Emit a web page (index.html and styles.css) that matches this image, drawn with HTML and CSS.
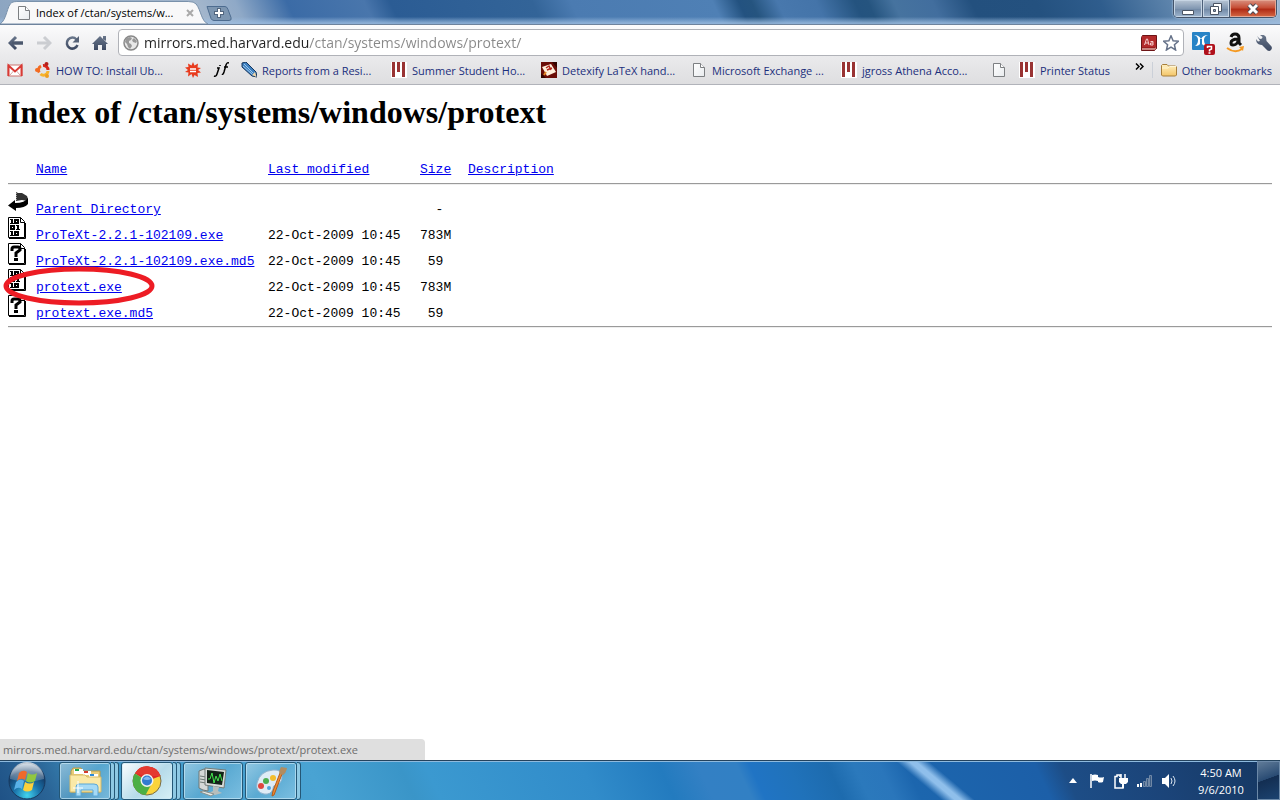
FILE: index.html
```html
<!DOCTYPE html>
<html lang="en">
<head>
<meta charset="utf-8">
<title>Index of /ctan/systems/windows/protext</title>
<link rel="stylesheet" href="styles.css">
</head>
<body>
<svg class="defs" width="0" height="0" aria-hidden="true">
  <defs>
    <linearGradient id="paper" x2="1" y2="1"><stop offset="0" stop-color="#fff"/><stop offset="1" stop-color="#e8ebee"/></linearGradient>
    <linearGradient id="shade" x2="0" y2="1"><stop offset="0" stop-color="#68758a"/><stop offset="1" stop-color="#3d4962"/></linearGradient>
    <linearGradient id="folder" x2="0" y2="1"><stop offset="0" stop-color="#fff0c0"/><stop offset="1" stop-color="#f3c568"/></linearGradient>
    <radialGradient id="orb" cx=".5" cy=".9" r=".9"><stop offset="0" stop-color="#42d4ee"/><stop offset=".4" stop-color="#1a73ab"/><stop offset=".75" stop-color="#123c69"/><stop offset="1" stop-color="#7694b1"/></radialGradient>
    <linearGradient id="gloss" x2="0" y2="1"><stop offset="0" stop-color="#fff" stop-opacity=".75"/><stop offset="1" stop-color="#fff" stop-opacity=".15"/></linearGradient>
    <symbol id="page" viewBox="0 0 16 16"><path d="M2.5 1.5h7l4 4v9h-11z" fill="url(#paper)" stroke="#7c7f82"/><path d="M9.5 1.5v4h4" fill="#fff" stroke="#7c7f82"/></symbol>
    <symbol id="mit" viewBox="0 0 16 16"><path fill="#fff" d="M0 0h16v16H0z"/><path fill="#993333" d="M1 0h3v15H1zM6 0h3v10H6zM11 0h3v15h-3z"/></symbol>
    <symbol id="sheet" viewBox="0 0 20 22"><path d="M.5.5h12l4 4v16H.5z" fill="#fff" stroke="#000"/><path d="M12.5.5v5h4" fill="none" stroke="#000"/><path d="M17.500 6v15.500H1" fill="none" stroke="#000"/></symbol>
    <symbol id="binary" viewBox="0 0 20 22"><use href="#sheet"/><g fill="none" stroke="#000" stroke-width="2"><path d="M4 2v5M4 14v5M10 8v5"/><rect x="7" y="3" width="3" height="3"/><rect x="3" y="9" width="3" height="3"/><rect x="7" y="15" width="3" height="3"/></g><path d="M2 2h2v1H2zM2 6h4v1H2zM2 14h2v1H2zM2 18h4v1H2zM8 8h2v1H8zM8 12h4v1H8z"/></symbol>
    <symbol id="unknown" viewBox="0 0 20 22"><use href="#sheet"/><path d="M4 8V6q0-2 2-2h4q2 0 2 2v1l-4 3v4" fill="none" stroke="#000" stroke-width="3"/><path d="M6 15h4v3H6z"/></symbol>
  </defs>
</svg>

<header class="browser">
  <div class="titlebar">
    <div class="tab">
      <svg class="tab-shape" viewBox="0 0 210 23" preserveAspectRatio="none" aria-hidden="true"><path d="M0 23C7 19 7 4 12 1.500Q14 .5 17 .5H190Q196 .5 198 3C203 9 203 20 210 23Z" fill="#f8f8f9" stroke="#7890aa"/></svg>
      <svg class="icon" viewBox="0 0 16 16" aria-hidden="true"><use href="#page"/></svg>
      <span class="tab-title">Index of /ctan/systems/w...</span>
      <button class="plain tab-close" aria-label="Close tab"><svg width="8" height="8" viewBox="0 0 8 8"><path d="M1 1l6 6M7 1L1 7" stroke="#a9a9a9" stroke-width="2"/></svg></button>
    </div>
    <button class="plain new-tab" aria-label="New tab"><svg width="26" height="16" viewBox="0 0 26 16"><path d="M1 1.500h18q2 0 3 3l3 8q1 3-2 3H8q-2 0-3-2z" fill="#7d96b1" stroke="#4d6c90"/><path d="M13 3v10M8 8h10" stroke="#52667f" stroke-width="4"/><path d="M13 4v8M9 8h8" stroke="#fff" stroke-width="2"/></svg></button>
    <div class="window-controls">
      <button class="win min" aria-label="Minimize"><svg width="14" height="14" viewBox="0 0 14 14"><path d="M1.500 8.500h11v4h-11z" fill="#fff" stroke="#4b5564"/></svg></button>
      <button class="win max" aria-label="Restore"><svg width="14" height="14" viewBox="0 0 14 14"><path d="M4.500 1.500h8v8h-8z" fill="#fff" stroke="#4b5564"/><path d="M1.500 4.500h8v8h-8z" fill="#fff" stroke="#4b5564"/><path d="M4.500 7.500h2v2h-2z" fill="#8fa4bb" stroke="#4b5564"/></svg></button>
      <button class="win close" aria-label="Close"><svg width="14" height="14" viewBox="0 0 14 14"><path d="M3 3l8 8M11 3l-8 8" stroke="#4b4a55" stroke-width="5"/><path d="M3 3l8 8M11 3l-8 8" stroke="#fff" stroke-width="3"/></svg></button>
    </div>
  </div>

  <div class="toolbar">
    <button class="plain" aria-label="Back"><svg class="nav" viewBox="0 0 16 16"><path d="M8 2L2 8l6 6M3 8h12" fill="none" stroke="url(#shade)" stroke-width="3"/><path d="M4 6.500h11v3H4z" fill="#4c586d"/></svg></button>
    <button class="plain" aria-label="Forward"><svg class="nav" viewBox="0 0 16 16"><path d="M8 2l6 6-6 6" fill="none" stroke="#cbcdd1" stroke-width="3"/><path d="M1 6.500h11v3H1z" fill="#cbcdd1"/></svg></button>
    <button class="plain" aria-label="Reload"><svg class="nav" viewBox="0 0 16 16"><path d="M12.500 4.500A5.500 5.500 0 1 0 13.500 10" fill="none" stroke="url(#shade)" stroke-width="2.500"/><path d="M15 1v6.500H8.500z" fill="#566277"/></svg></button>
    <button class="plain" aria-label="Home"><svg class="nav" viewBox="0 0 16 16"><path d="M8 1l8 8h-2v6h-4v-5H6v5H2V9H0l8-8zM11 1h3v5l-3-2z" fill="url(#shade)"/></svg></button>
    <div class="omnibox">
      <svg class="icon" viewBox="0 0 16 16" aria-hidden="true"><circle cx="8" cy="8" r="7" fill="#e8e8e8" stroke="#888" stroke-width="1.500"/><path d="M3 3l4-1 2 1-1 2-2 1v2l2 1 1 2-2 3-2-2-1-3-2-2zM11 3l3 3-1 2-3-1-1-2z" fill="#989898"/></svg>
      <input class="address" type="text" aria-label="Address" value="mirrors.med.harvard.edu/ctan/systems/windows/protext/">
      <button class="plain" aria-label="Dictionary"><svg class="icon" viewBox="0 0 16 16"><path d="M.5 2.500l1-2h14v13l-2 2H.5z" fill="#9c1c1e" stroke="#6d1517"/><path d="M1 13h13l1-1v2l-1 1H1z" fill="#c98580"/><path d="M1 1h14v11H1z" fill="#b32a2b"/><path d="M3.500 10l2-6h1l1.500 6M4 8h3.500M9.500 6.500H12V10H9.500V8H12" fill="none" stroke="#f6cccc"/></svg></button>
      <button class="plain" aria-label="Bookmark this page"><svg class="icon" viewBox="0 0 16 16"><path d="M8 .8l2.100 4.900 5.300.5-4 3.500 1.200 5.300L8 12.200 3.400 15l1.200-5.300-4-3.500 5.300-.5z" fill="#fff" stroke="#67738a" stroke-width="1.500"/></svg></button>
    </div>
    <div class="extensions">
      <button class="plain" aria-label="Extension"><svg width="24" height="24" viewBox="0 0 24 24"><rect y="1" width="18" height="18" rx="1" fill="#2783c6"/><path d="M2 4q5 0 7 4 2-4 7-4-4 1-4 5t3 6q-5 0-6-4-1 4-6 4 3-2 3-6T2 4z" fill="#fff"/><path d="M8 8h2v5H8z" fill="#2783c6"/><rect x="12" y="13" width="11" height="11" rx="2" fill="#b0101b"/><path d="M15.500 17v-1.500h4V18l-2 1v1.500M16.500 22h2" fill="none" stroke="#fff" stroke-width="1.500"/></svg></button>
      <button class="plain" aria-label="Amazon"><svg width="20" height="22" viewBox="0 0 20 22"><path d="M5 5q1-3 4-3 4 0 4 4v5l2 2M12 7q-7 0-7 4 0 2 2 2 4 0 5-4" fill="none" stroke="#111" stroke-width="3"/><path d="M1 16q8 6 15 1" fill="none" stroke="#f59a23" stroke-width="2"/><path d="M13 15l5-1-1 5z" fill="#f59a23"/></svg></button>
      <button class="plain" aria-label="Settings"><svg class="nav" viewBox="0 0 16 16"><path d="M1 1l3 3 2-.5L6.500 2 4 0q4-1 6 2l.5 4 5 5.500q1 2-.5 3.500t-3.500.5L6 10Q2 10 .5 7L0 4l2 2.500 2-.5" fill="url(#shade)"/></svg></button>
    </div>
  </div>

  <nav class="bookmarks" aria-label="Bookmarks">
    <a href="#" aria-label="Gmail"><svg class="icon" viewBox="0 0 16 16"><path d="M1 3h14v11H1z" fill="#fff" stroke="#cd7470"/><path d="M1.500 14V3.500L8 9.500l6.500-6V14" fill="none" stroke="#d93a35" stroke-width="2"/><path d="M3 13l3.500-4M13 13L9.500 9" stroke="#d7a5a2"/></svg></a>
    <a class="wide" href="#"><svg class="icon" viewBox="0 0 16 16"><g fill="none" stroke-width="3"><path d="M4.200 10.500A4.500 4.500 0 0 1 6 4" stroke="#f36b22"/><path d="M8 3.500A4.500 4.500 0 0 1 13 8" stroke="#d9261b"/><path d="M5.500 12A4.500 4.500 0 0 0 13 9" stroke="#f7b32b"/></g><circle cx="2" cy="8" r="2" fill="#f36b22"/><circle cx="11.500" cy="2" r="2" fill="#b3201c"/><circle cx="12" cy="14" r="2" fill="#ee9d20"/></svg><span>HOW TO: Install Ub...</span></a>
    <a href="#" aria-label="Red star"><svg class="icon" viewBox="0 0 16 16"><path d="M8 0l1.500 3.500L13 1.500l-.5 4 3.500.5-3 2 3 2.500-3.500.5.500 4-3.500-2L8 16l-1.500-4L3 14.500l.5-4L0 10l3-2-3-2.500 3.500-.5L3 1.500l3.500 2z" fill="#e83b1e"/><path d="M5 7h6M5 9.500h6" stroke="#fff" stroke-width="1.500"/></svg></a>
    <a href="#" aria-label="jf"><svg class="icon" viewBox="0 0 16 16"><path d="M1 14q2 1 3-2l2-6H4M7 3v1M9 12q1 1 2-2l2-7q1-3 3-2M11 5h4" fill="none" stroke="#000" stroke-width="1.500"/></svg></a>
    <a class="wide" href="#"><svg class="icon" viewBox="0 0 16 16"><path d="M1 1l4-1 10 10 1 5-5-1L1 5z" fill="#3d7fbf" stroke="#16375f"/><path d="M3 2l9 9M2 4l9 8" stroke="#9cc7ec"/><path d="M11 13l3-3 1.500 5z" fill="#f0d6a8"/></svg><span>Reports from a Resi...</span></a>
    <a class="wide" href="#"><svg class="icon" viewBox="0 0 16 16"><use href="#mit"/></svg><span>Summer Student Ho...</span></a>
    <a class="wide" href="#"><svg class="icon" viewBox="0 0 16 16"><path d="M0 0h16v16H0z" fill="#6b0d07"/><path d="M0 11l5 5H0zM11 0h5v6z" fill="#320400"/><path d="M1 5l9-3 5 8-9 4z" fill="#fff0dc"/><path d="M5 6l3-2 2 4M6 8l5-2" stroke="#b3241a" stroke-width="1.500" fill="none"/><path d="M3 13l2-3" stroke="#e58c28" stroke-width="2"/></svg><span>Detexify LaTeX hand...</span></a>
    <a class="wide" href="#"><svg class="icon" viewBox="0 0 16 16"><use href="#page"/></svg><span>Microsoft Exchange ...</span></a>
    <a class="wide" href="#"><svg class="icon" viewBox="0 0 16 16"><use href="#mit"/></svg><span>jgross Athena Acco...</span></a>
    <a href="#" aria-label="Untitled page"><svg class="icon" viewBox="0 0 16 16"><use href="#page"/></svg></a>
    <a href="#"><svg class="icon" viewBox="0 0 16 16"><use href="#mit"/></svg><span>Printer Status</span></a>
    <button class="plain overflow" aria-label="More bookmarks"><svg width="9" height="7" viewBox="0 0 9 7"><path d="M1 .5l3 3-3 3M5 .5l3 3-3 3" fill="none" stroke="#000" stroke-width="1.500"/></svg></button>
    <a class="other" href="#"><svg class="icon" viewBox="0 0 16 16"><path d="M.5 13V3.500l1-1H6L7.500 4h7l1 1v8l-1 1h-13z" fill="url(#folder)" stroke="#a77f3b"/><path d="M1 6h6l1.500-1.500H15" fill="none" stroke="#fff5d5"/></svg><span>Other bookmarks</span></a>
  </nav>
</header>

<main class="content">
  <h1>Index of /ctan/systems/windows/protext</h1>
  <table class="listing">
    <thead>
      <tr><th class="pic"></th><th class="name"><a href="#">Name</a></th><th class="date"><a href="#">Last modified</a></th><th class="size"><a href="#">Size</a></th><th><a href="#">Description</a></th></tr>
    </thead>
    <tbody>
      <tr class="rule"><td colspan="5"><hr></td></tr>
      <tr><td><svg class="file" viewBox="0 0 20 22" aria-hidden="true"><path d="M8 1l2 1h4l5 3 1 3-1 2-5-1-6 1z" fill="#333"/><path d="M8 2l1 1M8 4l1 1M8 6l1 1M8 8l1 1" stroke="#999"/><path d="M20 7v6q-3 4-12 4v3L0 14.500 7 9v3q10 0 13-5z"/></svg></td><td><a href="#">Parent Directory</a></td><td></td><td>&nbsp; -</td><td></td></tr>
      <tr><td><svg class="file" viewBox="0 0 20 22" aria-hidden="true"><use href="#binary"/></svg></td><td><a href="#">ProTeXt-2.2.1-102109.exe</a></td><td>22-Oct-2009 10:45</td><td>783M</td><td></td></tr>
      <tr><td><svg class="file" viewBox="0 0 20 22" aria-hidden="true"><use href="#unknown"/></svg></td><td><a href="#">ProTeXt-2.2.1-102109.exe.md5</a></td><td>22-Oct-2009 10:45</td><td>&nbsp;59</td><td></td></tr>
      <tr><td class="marked"><svg class="file" viewBox="0 0 20 22" aria-hidden="true"><use href="#binary"/></svg><svg class="ring" width="152" height="40" viewBox="0 0 152 40" aria-hidden="true"><ellipse cx="76" cy="20" rx="73" ry="17" fill="none" stroke="#ed1c24" stroke-width="5"/></svg></td><td><a href="#">protext.exe</a></td><td>22-Oct-2009 10:45</td><td>783M</td><td></td></tr>
      <tr><td><svg class="file" viewBox="0 0 20 22" aria-hidden="true"><use href="#unknown"/></svg></td><td><a href="#">protext.exe.md5</a></td><td>22-Oct-2009 10:45</td><td>&nbsp;59</td><td></td></tr>
      <tr class="rule"><td colspan="5"><hr></td></tr>
    </tbody>
  </table>
  <div class="status">mirrors.med.harvard.edu/ctan/systems/windows/protext/protext.exe</div>
</main>

<footer class="taskbar">
  <button class="plain start" aria-label="Start"><svg width="38" height="38" viewBox="0 0 38 38"><circle cx="19" cy="19" r="18" fill="url(#orb)" stroke="#18395e"/><path d="M2 17A17 17 0 0 1 36 17Q19 22 2 17z" fill="url(#gloss)"/><path d="M11 11q4-4 8-1l-2 8q-4-3-8 1z" fill="#ef6a2b"/><path d="M20 11q4 3 9 0l-2 8q-5 3-9 0z" fill="#91c73f"/><path d="M8 20q4-4 8-1l-2 8q-4-3-8 1z" fill="#58b1e8"/><path d="M17 20q5 3 9 0l-2 8q-5 3-9 0z" fill="#fbd03c"/></svg></button>
  <div class="tasks">
    <div class="stack"><button class="task" aria-label="Explorer"><svg width="36" height="34" viewBox="0 0 36 34"><path d="M4 28V7l2-3h8l2 3h17v21z" fill="#e9cd78" stroke="#b89a4b"/><path d="M7 5h9v5H7z" fill="#fff"/><path d="M8 5h4v2H8z" fill="#20a64c"/><path d="M16 7h8v4h-8z" fill="#fff"/><path d="M17 7h4v2h-4z" fill="#d63a2b"/><path d="M22 10h9v3h-9z" fill="#fff"/><path d="M23 10h4v2h-4z" fill="#2c8bd8"/><path d="M3 11h15l2 2h14v15H3z" fill="#fae9a7" stroke="#d8bb68"/><path d="M9 32V23q0-3 3-3h15q4 0 4 3v9h-5v-6H14v6z" fill="#a5daf5" stroke="#5ba7d6"/><path d="M11 17v12M6 24h10" stroke="#fff"/></svg></button><i class="layer"></i><i class="layer"></i></div>
    <div class="stack active"><button class="task" aria-label="Chrome"><svg width="32" height="32" viewBox="0 0 32 32"><circle cx="16" cy="16" r="14" fill="#fad43b" stroke="#776b48"/><path d="M16 16L4 8.500A14 14 0 0 1 29.500 11z" fill="#de2b28"/><path d="M16 16L4 8.500A14 14 0 0 0 14.500 30L20 20z" fill="#4caf45"/><path d="M4 8.500A14 14 0 0 1 29.500 11H16z" fill="#e43a30"/><circle cx="16" cy="15.500" r="6.500" fill="#f1f2ee"/><circle cx="16" cy="15.500" r="5" fill="#327bd0"/><path d="M12 14q4-5 8 0-4 2-8 0z" fill="#82b6f1"/></svg></button><i class="layer"></i><i class="layer"></i></div>
    <div class="stack single"><button class="task" aria-label="Task Manager"><svg width="34" height="32" viewBox="0 0 34 32"><path d="M3 6l5-2 4 2v20l-5-1-4-2z" fill="#d5d9d8" stroke="#6e7775"/><path d="M4 11l6 1M4 14l6 1M4 17l6 1" stroke="#6f7b76"/><path d="M9 3l21 2-2 18-19-3z" fill="#d8dcda" stroke="#727b78"/><path d="M11 5l17 2-2 13-15-2z" fill="#122217"/><path d="M12 14h2l2-6 2 10 2-7 2 5 2-7 2 7" fill="none" stroke="#43e34d"/><path d="M17 21l6 1-1 4 4 2-7 2-6-2 4-2z" fill="#b7bebc"/><path d="M7 26l11 3-3 2-11-4z" fill="#e5e8e6" stroke="#89918e"/></svg></button></div>
    <div class="stack"><button class="task" aria-label="Paint"><svg width="34" height="32" viewBox="0 0 34 32"><path d="M19 5q9-1 9 7 0 6-5 7-5 2-4 5-2 6-9 5-9-2-7-11Q6 6 19 5z" fill="#dfecf6" stroke="#8fb2cd"/><circle cx="12" cy="16" r="3" fill="#4bae50"/><circle cx="19" cy="13" r="3" fill="#f3be2e"/><circle cx="7" cy="21" r="3" fill="#df4740"/><circle cx="15" cy="23" r="2" fill="#4fa6dd"/><path d="M28 9L20 30l-2 1 1-5 7-18z" fill="#ee8b32" stroke="#b45b1b"/><path d="M25 9q0-4 2-7l6 1q-1 5-4 7z" fill="#b18c60"/></svg></button><i class="layer"></i></div>
  </div>
  <div class="tray">
    <button class="plain" aria-label="Show hidden icons"><svg width="8" height="5" viewBox="0 0 8 5"><path d="M0 5l4-5 4 5z" fill="#fff"/></svg></button>
    <button class="plain" aria-label="Action Center"><svg width="16" height="16" viewBox="0 0 16 16"><path d="M2 1v14" stroke="#fff" stroke-width="1.500"/><path d="M3 2q3-1 6 0v2q3 1 6 0l-1 5q-3 1-5 0V8Q6 7 3 8z" fill="#fff"/></svg></button>
    <button class="plain" aria-label="Power"><svg width="16" height="16" viewBox="0 0 16 16"><path d="M7 4V2H4v1.500H2V15h8v-2" fill="none" stroke="#fff" stroke-width="1.500"/><path d="M8 1v5M12 1v5" stroke="#fff" stroke-width="1.500"/><path d="M6 5h9v4l-2 2h-2v4H9v-4H8L6 9z" fill="#fff"/><path d="M5 5v8" stroke="#183c68"/></svg></button>
    <button class="plain" aria-label="Network"><svg width="16" height="16" viewBox="0 0 16 16"><path d="M0 11h2v3H0zM3 10h2v4H3z" fill="#fff"/><path d="M6.500 8.500h2v5h-2zM9.500 5.500h2v8h-2zM12.500 2.500h2v11h-2z" fill="#3d5d85" stroke="#7088a6"/></svg></button>
    <button class="plain" aria-label="Volume"><svg width="16" height="16" viewBox="0 0 16 16"><path d="M1 5h3l4-4v14l-4-4H1z" fill="#fff"/><path d="M10 5q2 3 0 6M12 3q4 5 0 10" fill="none" stroke="#dce6f1"/></svg></button>
    <div class="clock"><span>4:50 AM</span><span>9/6/2010</span></div>
  </div>
  <button class="desktop" aria-label="Show desktop"></button>
</footer>
</body>
</html>
```
FILE: styles.css
```css
* { box-sizing: border-box; }
body {
  margin: 0;
  min-height: 100vh;
  display: flex;
  flex-direction: column;
  background: #fff;
  color: #000;
  font-family: "Open Sans", "Noto Sans", sans-serif;
  font-size: 12px;
}
svg { display: block; flex: none; }
.defs { position: absolute; }
.icon, .nav { width: 16px; height: 16px; }
.plain { display: block; padding: 0; border: 0; background: none; font: inherit; flex: none; }

/* Window frame */
.titlebar {
  display: flex;
  align-items: flex-end;
  height: 25px;
  border-bottom: 1px solid #6e839d;
  background:
    linear-gradient(to bottom, transparent 70%, #9dbde0cc 96%),
    linear-gradient(65deg, #8ca5c1 0%, #a3b6cc 16%, #8fa9c7 19%, #3b6ba6 23%, #4976ac 29%, #2b5c94 31%, #336498 42%, #4b7bb1 45%, #4f80b5 56%, #235280 58%, #25547f 59%, #4878ad 61%, #4474a9 64%, #24537f 67%, #25547f 68%, #46739f 70%, #426e9e 73%, #23507e 76%, #24517f 81%, #2f5d8d 86%, #6288af 92%, #9cb6d0 100%);
}
.tab { position: relative; display: flex; align-items: center; width: 208px; height: 23px; padding: 0 14px 0 16px; gap: 4px; }
.tab-shape { position: absolute; inset: 0; width: 100%; height: 100%; }
.tab .icon, .tab-title, .tab-close { position: relative; }
.tab-title { flex: 1; font-size: 11px; white-space: nowrap; }
.new-tab { margin-bottom: 3px; margin-left: -2px; }
.window-controls { display: flex; align-self: flex-start; margin-left: auto; margin-right: 3px; border: 1px solid #44546a; border-top: 0; border-radius: 0 0 5px 5px; overflow: hidden; box-shadow: 0 0 2px #dbe8f5; }
.win { display: grid; place-items: center; height: 17px; padding: 0; border: 0; border-right: 1px solid #4c5f78; background: linear-gradient(#b9c6d5, #8298b2 50%, #7087a4 51%, #9eb6cf); box-shadow: inset 0 0 0 1px #c7d5e4; }
.min { width: 29px; }
.max { width: 27px; }
.close { width: 46px; border: 0; background: linear-gradient(#d99080, #c64e36 45%, #b12c16 55%, #d66a45); box-shadow: inset 0 0 0 1px #e4a693; }

.toolbar { display: flex; align-items: center; height: 31px; padding: 4px 8px 0; gap: 12px; background: linear-gradient(#fbfbfc, #eaeaec); }
.omnibox { display: flex; flex: 1; align-items: center; height: 27px; margin-left: -2px; padding: 0 4px; gap: 6px; border: 1px solid #b0b2b8; border-radius: 4px; background: #fff; }
.address {
  flex: 1;
  min-width: 0;
  height: 24px;
  margin: 0 0 0 -1px;
  padding: 0;
  border: 0;
  outline: 0;
  font: 14px "Open Sans", "Noto Sans", sans-serif;
  background: linear-gradient(to right, #222 165px, #888 165px);
  background-clip: text;
  -webkit-text-fill-color: transparent;
}
.extensions { display: flex; align-items: center; gap: 10px; margin-left: -4px; }

.bookmarks { display: flex; align-items: center; height: 29px; padding: 0 8px 0 7px; gap: 12px; border-bottom: 1px solid #b1b3ba; background: linear-gradient(#eaeaec, #dedee0); }
.bookmarks a { display: flex; align-items: center; gap: 5px; color: #1b2f7c; font-size: 11px; text-decoration: none; white-space: nowrap; }
.bookmarks .wide { width: 138px; }
.bookmarks .overflow { margin-left: auto; align-self: flex-start; margin-top: 7px; margin-right: -4px; }
.bookmarks .other { padding-left: 8px; border-left: 1px solid #cbd0d8; }

/* Directory listing */
.content { position: relative; flex: 1; padding: 9px 8px 0; }
h1 { margin: 0 0 30px; font: bold 32px/36px "Liberation Serif", serif; }
.listing { width: 100%; border-collapse: collapse; table-layout: fixed; font: 13px/14px "Liberation Mono", monospace; }
.listing th, .listing td { padding: 0; text-align: left; vertical-align: baseline; font-weight: normal; white-space: pre; }
.listing th { height: 18px; padding-top: 3px; }
.listing a { color: #00e; }
.listing td { height: 26px; }
.listing .pic { width: 28px; }
.listing .name { width: 232px; }
.listing .date { width: 152px; }
.listing .size { width: 48px; }
.listing .rule td { height: 13px; line-height: 0; }
.listing hr { margin: 5px 0 6px; height: 2px; border: solid; border-width: 1px 0; border-color: #9a9a9a #eee #eee; }
.file { display: inline-block; width: 20px; height: 22px; }
.marked { position: relative; }
.ring { position: absolute; left: -5px; top: -3px; }
.status { position: absolute; left: 0; bottom: 0; min-width: 425px; height: 21px; padding: 0 3px; border-radius: 0 4px 0 0; background: #dfdfdf; color: #6d6d6d; font-size: 11px; line-height: 21px; }

/* Taskbar */
.taskbar {
  display: flex;
  height: 40px;
  border-top: 1px solid #24435e;
  box-shadow: inset 0 1px #8ebade;
  background:
    linear-gradient(40deg, transparent 71%, #8fbfeb 72%, #8fbfeb 72.500%, transparent 73.500%),
    linear-gradient(65deg, #1f5286 0%, #2a6496 4%, #4198c7 9%, #49a3d3 25%, #3a95c8 32%, #3b99d0 34%, #318cca 46%, #237bbf 52%, #3380c4 55%, #3280c4 58%, #2074c4 59%, #2072ba 62%, #1d6bae 65%, #2b79bc 67%, #2a76bb 69%, #1c66ae 71%, #1c5fa8 81%, #1d4d86 83%, #1b4479 90%, #15365f 100%);
}
.start { width: 55px; padding-left: 8px; }
.tasks { display: flex; gap: 2px; padding-left: 4px; }
.stack { display: flex; padding-top: 1px; height: 39px; }
.task { display: grid; place-items: center; width: 52px; padding: 0; border: 1px solid #245776; border-radius: 3px; background: linear-gradient(135deg, #b8dcecaa, #66b0d499 50%, #9ed3ec99); box-shadow: inset 0 0 0 1px #c9e9f7aa; }
.single .task { width: 60px; }
.active .task { background: linear-gradient(135deg, #fafdfe, #b6dbea 55%, #d6f0f6); }
.layer { width: 4px; border: solid #245776; border-width: 1px 1px 1px 0; border-radius: 0 3px 3px 0; background: #8ec9e4; }
.tray { display: flex; align-items: center; margin-left: auto; gap: 8px; color: #fff; }
.tray > :first-child { margin-right: 4px; }
.clock { display: flex; flex-direction: column; width: 72px; text-align: center; font-size: 11px; line-height: 17px; }
.desktop { width: 23px; padding: 0; border: 1px solid #6c89a8; background: linear-gradient(160deg, #607b98, #294b73 45%, #132e52 46%, #1c4370); }
```
